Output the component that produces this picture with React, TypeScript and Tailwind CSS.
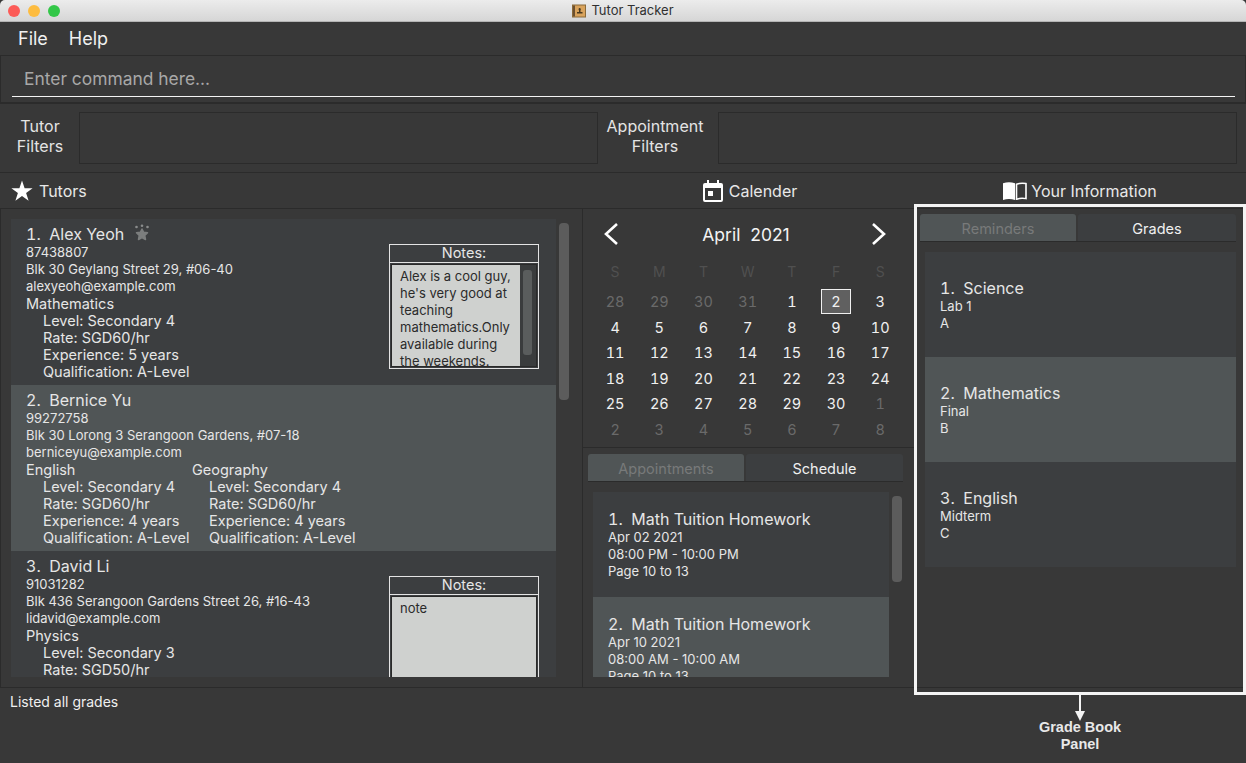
import React from "react";

const Font = { fontFamily: '"Inter", "Liberation Sans", sans-serif' };

function Subject({ s }: { s: string[] }) {
  return (
    <div className="w-[166px] shrink-0">
      <div className="h-[17px] leading-[17px] text-[14.5px]">{s[0]}</div>
      <div className="pl-[17px] text-[14.5px] leading-[17px] whitespace-nowrap">
        <div>Level: {s[1]}</div>
        <div>Rate: {s[2]}</div>
        {s[3] && <div>Experience: {s[3]}</div>}
        {s[3] && <div>Qualification: A-Level</div>}
      </div>
    </div>
  );
}

function Notes({ children, scroll }: { children: React.ReactNode; scroll?: boolean }) {
  return (
    <div className="absolute left-[378px] top-[25px] w-[150px] h-[125px] border border-[#e4e4e4] flex flex-col">
      <div className="h-[18px] shrink-0 border-b border-[#e4e4e4] text-center text-[14.5px] leading-[15px]">Notes:</div>
      <div className="flex-1 flex m-px border border-[#2a2a2a] min-h-0">
        <div className="flex-1 bg-[#cfd1cf] text-[#2b2b2b] text-[13px] leading-[17px] pl-[8px] pt-[3px] overflow-hidden whitespace-pre-line">{children}</div>
        {scroll && (
          <div className="w-[16px] bg-[#3a3c3d] pt-[5px] pl-[3px] shrink-0">
            <div className="w-[9px] h-[85px] rounded-[3px] bg-[#5a5d5d]" />
          </div>
        )}
      </div>
    </div>
  );
}

function Tutor({ selected, name, phone, addr, mail, subjects, notes, badge, scroll, h = 166 }: any) {
  return (
    <div
      className={`relative w-[545px] shrink-0 pl-[15px] pt-[5px] text-[#e6e6e6] overflow-hidden ${selected ? "bg-[#505556]" : "bg-[#3c3e40]"}`}
      style={{ height: h }}
    >
      <div className="h-[20px] text-[16px] leading-[20px] flex items-center whitespace-pre tabular-nums">
        {name}
        {badge && (
          <svg width="16" height="18" viewBox="0 0 16 18" className="ml-[10px] -mt-[3px] blur-[0.4px]">
            <path d="M8 5l1.700 3.300 3.800.5-2.800 2.700.8 4L8 13.600l-3.500 1.900.8-4-2.800-2.700 3.800-.5z" fill="#7c7e7e" stroke="#7c7e7e" strokeWidth="1.500" strokeLinejoin="round" />
            <circle cx="2.500" cy="3" r="1.300" fill="#8a8c8c" />
            <circle cx="13.500" cy="3" r="1.300" fill="#8a8c8c" />
            <circle cx="8" cy="1.800" r="1.300" fill="#8a8c8c" />
          </svg>
        )}
      </div>
      <div className="text-[13px] leading-[17px] whitespace-nowrap">
        <div>{phone}</div>
        <div>{addr}</div>
        <div>{mail}</div>
      </div>
      <div className="flex">
        {subjects.map((s: string[], i: number) => (
          <Subject key={i} s={s} />
        ))}
      </div>
      {notes && <Notes scroll={scroll}>{notes}</Notes>}
    </div>
  );
}

function Card({ title, lines, selected, w, pt }: any) {
  return (
    <div className={`${w} ${pt} shrink-0 h-[105px] pl-[15px] text-[#e6e6e6] ${selected ? "bg-[#505556]" : "bg-[#3c3e40]"}`}>
      <div className="text-[16px] h-[20px] leading-[21px] whitespace-pre tabular-nums">{title}</div>
      <div className="text-[13px] leading-[17px]">
        {lines.map((l: string) => (
          <div key={l}>{l}</div>
        ))}
      </div>
    </div>
  );
}

function Tabs({ a, b, aw, bw }: any) {
  return (
    <div className="h-[28px] flex gap-[2px] border-b border-[#2b2b2b] text-[14.5px] shrink-0">
      <div className="h-[27px] pt-[2px] bg-[#505556] text-[#787a7a] rounded-t-[3px] flex items-center justify-center" style={{ width: aw }}>{a}</div>
      <div className="h-[27px] pt-[2px] bg-[#3c3e40] text-[#f0f0f0] rounded-t-[3px] flex items-center justify-center" style={{ width: bw }}>{b}</div>
    </div>
  );
}

const Cal = [
  ["28", "29", "30", "31", "1", "2", "3"],
  ["4", "5", "6", "7", "8", "9", "10"],
  ["11", "12", "13", "14", "15", "16", "17"],
  ["18", "19", "20", "21", "22", "23", "24"],
  ["25", "26", "27", "28", "29", "30", "1"],
  ["2", "3", "4", "5", "6", "7", "8"],
];

function Calendar() {
  return (
    <div className="h-[239px] shrink-0 border-b border-[#2b2b2b] flex flex-col">
      <div className="h-[50px] flex items-center justify-between pl-[20px] pr-[27px] shrink-0">
        <svg width="16" height="24" viewBox="0 0 16 24" fill="none" stroke="#fff" strokeWidth="2.600"><path d="M14 2 3 12l11 10" /></svg>
        <div className="text-[17.5px] text-[#f4f4f4] whitespace-pre pt-[2px] pl-[2px]">April  2021</div>
        <svg width="16" height="24" viewBox="0 0 16 24" fill="none" stroke="#fff" strokeWidth="2.600"><path d="M2 2l11 10L2 22" /></svg>
      </div>
      <div className="grid grid-cols-[repeat(7,44.2px)] pl-[10px] text-center text-[14.5px] tabular-nums">
        {["S", "M", "T", "W", "T", "F", "S"].map((d, i) => (
          <div key={i} className="h-[25px] leading-[25px] text-[#505050] text-[14px]">{d}</div>
        ))}
        {Cal.map((row, r) => (
          <React.Fragment key={r}>
            {row.map((d, c) => {
              const dim = (r === 0 && c < 4) || r === 5 || (r === 4 && c === 6);
              const sel = r === 0 && c === 5;
              return (
                <div key={c} className={`h-[25.6px] flex items-center justify-center ${r === 0 ? "mt-[5px]" : ""} ${dim ? "text-[#6a6a6a]" : "text-[#f0f0f0]"}`}>
                  {sel ? <div className="w-[30px] h-[25px] border border-[#f0f0f0] bg-[#606060] flex items-center justify-center">{d}</div> : d}
                </div>
              );
            })}
          </React.Fragment>
        ))}
      </div>
    </div>
  );
}

function HeaderCell({ className, icon, text }: any) {
  return (
    <div className={`flex items-center text-[16px] text-[#e8e8e8] ${className}`}>
      {icon}
      <span>{text}</span>
    </div>
  );
}

export default function App() {
  return (
    <div className="relative w-[1246px] h-[763px] overflow-hidden bg-[#383838] flex flex-col" style={Font}>
      {/* title bar */}
      <div className="relative h-[22px] shrink-0 bg-gradient-to-b from-[#ececec] to-[#d6d6d6] border-b border-[#b4b4b4] rounded-t-[5px] flex items-center justify-center text-[13px] text-[#303030]">
        <div className="absolute left-[8px] top-[5px] flex gap-[8px]">
          <span className="w-[12px] h-[12px] rounded-full bg-[#fc5b57]" />
          <span className="w-[12px] h-[12px] rounded-full bg-[#fdbc40]" />
          <span className="w-[12px] h-[12px] rounded-full bg-[#33c748]" />
        </div>
        <svg width="14" height="14" viewBox="0 0 14 14" className="mr-[5px]">
          <rect x="0.500" y="1" width="13" height="12" fill="#d9a35c" stroke="#8a6a3a" />
          <rect x="1" y="1.500" width="2" height="11" fill="#6b5030" />
          <path d="M7.500 4a1.300 1.300 0 0 1 1 2.200V8h2v1.500H5V8h2V6.200A1.300 1.300 0 0 1 7.500 4z" fill="#4a3a20" />
        </svg>
        <span>Tutor Tracker</span>
      </div>
      {/* menu */}
      <div className="h-[34px] shrink-0 flex items-center pl-[18px] gap-[21px] text-[18px] text-[#f0f0f0] border-b border-[#2b2b2b]">
        <span>File</span>
        <span>Help</span>
      </div>
      {/* command */}
      <div className="h-[48px] shrink-0 border-b-2 border-[#2b2b2b] border-l border-r border-l-[#2b2b2b] border-r-[#2b2b2b] pl-[11px] pr-[10px]">
        <div className="h-[41px] border-b border-[#f4f4f4] pl-[12px] pt-[7px] flex items-center text-[17.4px] text-[#a8a8a8]">Enter command here...</div>
      </div>
      {/* filters */}
      <div className="h-[69px] shrink-0 border-b border-[#2b2b2b] flex items-center pl-[1px] pr-[9px] text-[16px] leading-[20px] text-[#e4e4e4]">
        <div className="w-[78px] text-center shrink-0 pb-[4px]">Tutor<br />Filters</div>
        <div className="w-[519px] h-[52px] shrink-0 border border-[#2b2b2b]" />
        <div className="w-[114px] mr-[6px] text-center shrink-0 pb-[4px]">Appointment<br />Filters</div>
        <div className="flex-1 h-[52px] border border-[#2b2b2b]" />
      </div>
      {/* headers */}
      <div className="h-[36px] shrink-0 flex border-b border-[#2b2b2b]">
        <HeaderCell
          className="w-[583px] pl-[11px]"
          text="Tutors"
          icon={<svg width="22" height="22" viewBox="0 0 22 22" className="mr-[6px]"><path d="M11 .5l2.600 7.700h8l-6.500 4.800 2.500 7.800L11 16l-6.600 4.800 2.500-7.800L.4 8.200h8z" fill="#fff" /></svg>}
        />
        <HeaderCell
          className="w-[331px] justify-center pl-[3px]"
          text="Calender"
          icon={<svg width="20" height="22" viewBox="0 0 20 22" className="mr-[6px]"><path d="M4 0h2v3h8V0h2v3h2a2 2 0 0 1 2 2v15a2 2 0 0 1-2 2H2a2 2 0 0 1-2-2V5a2 2 0 0 1 2-2h2zM2 8v12h16V8z" fill="#fff" fillRule="evenodd" /><rect x="5" y="11" width="5" height="5" fill="#fff" /></svg>}
        />
        <HeaderCell
          className="flex-1 justify-center"
          text="Your Information"
          icon={<svg width="24" height="18" viewBox="0 0 24 20" preserveAspectRatio="none" className="mr-[4px]"><path d="M0 1.500c4-1.500 8-1.500 12 0V20c-4-1.500-8-1.500-12 0z" fill="#fff" /><path d="M13.500 2.500c3-1.300 6-1.500 9.500-.8V18.500c-3.500-.8-6.500-.6-9.500.8z" fill="none" stroke="#fff" strokeWidth="1.600" /></svg>}
        />
      </div>
      {/* main */}
      <div className="h-[479px] shrink-0 flex border-b border-[#2b2b2b] border-l border-l-[#2b2b2b]">
        <div className="w-[582px] shrink-0 border-r border-[#2b2b2b] flex pl-[10px] pt-[10px] pb-[10px] gap-[3px]">
          <div className="w-[545px] flex flex-col overflow-hidden">
            <Tutor
              badge
              scroll
              name="1.  Alex Yeoh"
              phone="87438807"
              addr="Blk 30 Geylang Street 29, #06-40"
              mail="alexyeoh@example.com"
              subjects={[["Mathematics", "Secondary 4", "SGD60/hr", "5 years"]]}
              notes={"Alex is a cool guy,\nhe's very good at\nteaching\nmathematics.Only\navailable during\nthe weekends."}
            />
            <Tutor
              selected
              name="2.  Bernice Yu"
              phone="99272758"
              addr="Blk 30 Lorong 3 Serangoon Gardens, #07-18"
              mail="berniceyu@example.com"
              subjects={[
                ["English", "Secondary 4", "SGD60/hr", "4 years"],
                ["Geography", "Secondary 4", "SGD60/hr", "4 years"],
              ]}
            />
            <Tutor
              name="3.  David Li"
              phone="91031282"
              addr="Blk 436 Serangoon Gardens Street 26, #16-43"
              mail="lidavid@example.com"
              subjects={[["Physics", "Secondary 3", "SGD50/hr"]]}
              notes="note"
              h={126}
            />
          </div>
          <div className="pt-[4px]">
            <div className="w-[10px] h-[177px] rounded-[4px] bg-[#5c5c5c]" />
          </div>
        </div>
        <div className="w-[331px] shrink-0 flex flex-col">
          <Calendar />
          <div className="px-[5px] pt-[6px] shrink-0 w-[325px]">
            <Tabs a="Appointments" b="Schedule" aw={156} bw={157} />
          </div>
          <div className="flex pl-[10px] pt-[10px] gap-[3px] min-h-0 flex-1">
            <div className="w-[296px] h-[185px] flex flex-col overflow-hidden">
              <Card w="w-[296px]" pt="pt-[17px]" title="1.  Math Tuition Homework" lines={["Apr 02 2021", "08:00 PM - 10:00 PM", "Page 10 to 13"]} />
              <Card w="w-[296px]" pt="pt-[17px]" selected title="2.  Math Tuition Homework" lines={["Apr 10 2021", "08:00 AM - 10:00 AM", "Page 10 to 13"]} />
            </div>
            <div className="pt-[4px]">
              <div className="w-[10px] h-[86px] rounded-[4px] bg-[#5c5c5c]" />
            </div>
          </div>
        </div>
        <div className="flex-1 flex flex-col pl-[6px] pt-[5px]">
          <div className="w-[316px]">
            <Tabs a="Reminders" b="Grades" aw={156} bw={158} />
          </div>
          <div className="pl-[5px] pt-[10px] flex flex-col">
            <Card w="w-[311px]" pt="pt-[26px]" title="1.  Science" lines={["Lab 1", "A"]} />
            <Card w="w-[311px]" pt="pt-[26px]" selected title="2.  Mathematics" lines={["Final", "B"]} />
            <Card w="w-[311px]" pt="pt-[26px]" title="3.  English" lines={["Midterm", "C"]} />
          </div>
        </div>
      </div>
      {/* result */}
      <div className="flex-1 pl-[10px] pt-[5px] text-[14px] leading-[18px] text-[#f0f0f0]">Listed all grades</div>

      {/* annotation */}
      <div className="absolute left-[914px] top-[204px] w-[332px] h-[491px] border-[3px] border-[#f4f4f4] pointer-events-none" />
      <svg width="12" height="26" viewBox="0 0 12 26" className="absolute left-[1074px] top-[695px]">
        <rect x="5" y="0" width="2" height="17" fill="#f4f4f4" />
        <path d="M1 16h10l-5 10z" fill="#f4f4f4" />
      </svg>
      <div className="absolute left-[1020px] top-[719px] w-[120px] text-center text-[14.5px] leading-[17px] font-bold text-[#e8e8e8]" style={{ fontFamily: '"Liberation Sans", sans-serif' }}>
        Grade Book<br />Panel
      </div>
    </div>
  );
}
